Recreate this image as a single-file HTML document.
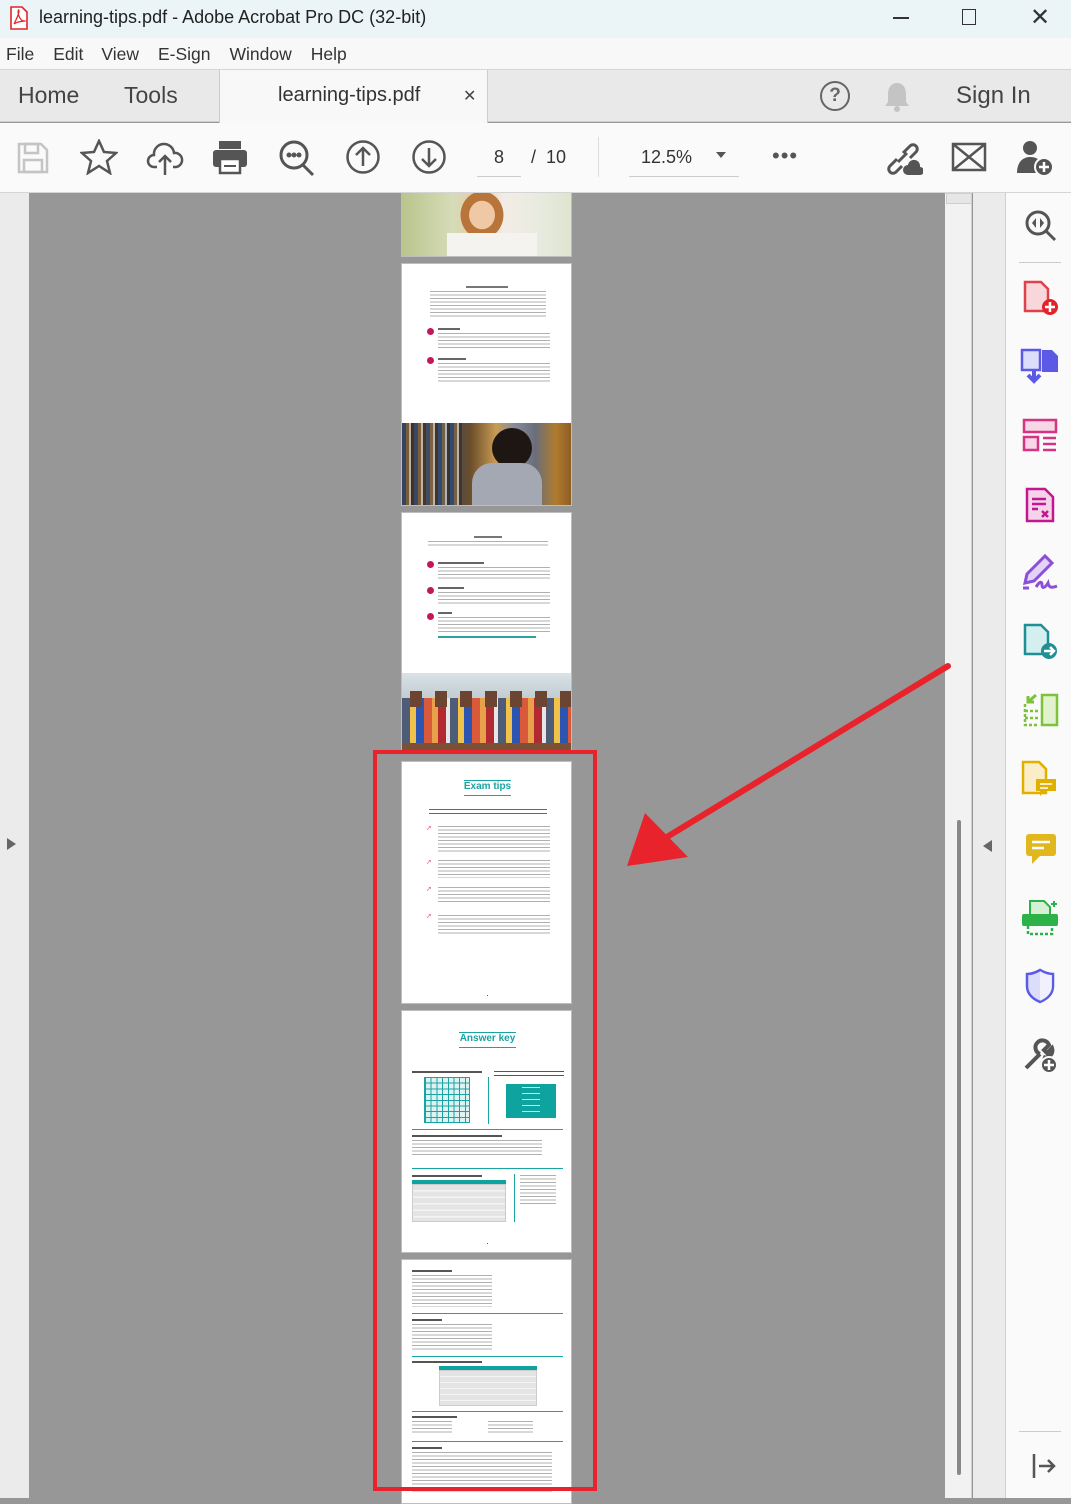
<!DOCTYPE html>
<html><head><meta charset="utf-8">
<style>
*{margin:0;padding:0;box-sizing:border-box}
body{width:1071px;height:1498px;position:relative;overflow:hidden;font-family:"Liberation Sans",sans-serif;background:#979797}
.a{position:absolute}
.t{position:absolute;background:repeating-linear-gradient(#b0b0b0 0 1px,transparent 1px 3.5px)}
.pg{position:absolute;left:401px;width:171px;background:#fff;border:1px solid #bdbdbd;overflow:hidden}
.dot{position:absolute;width:7px;height:7px;border-radius:50%;background:#c2185b}
.hr{position:absolute;height:1px;background:#1aa3a3}
.ic{position:absolute}
</style></head><body>
<div class="a" style="left:0;top:0;width:1071px;height:38px;background:#ebf5f8"></div>
<svg class="ic" style="left:9px;top:6px" width="20" height="24" viewBox="0 0 20 24"><path d="M2 1h11l5 5v17H2z" fill="#fff" stroke="#e0242a" stroke-width="1.6"/><path d="M5 18c3-6 5-10 5-13s-2 0 0 5 4 5 6 5-7 0-11 3" fill="none" stroke="#e0242a" stroke-width="1.2"/></svg>
<div class="a" style="left:39px;top:7px;font-size:18px;color:#222">learning-tips.pdf - Adobe Acrobat Pro DC (32-bit)</div>
<div class="a" style="left:893px;top:17px;width:16px;height:1.5px;background:#333"></div>
<div class="a" style="left:962px;top:9px;width:14px;height:16px;border:1.5px solid #333"></div>
<div class="a" style="left:1030px;top:3px;font-size:24px;color:#333">✕</div>
<div class="a" style="left:0;top:38px;width:1071px;height:32px;background:#f8f8f8;border-bottom:1px solid #d5d5d5"></div>
<div class="a" style="left:6px;top:44px;font-size:17.5px;color:#333"><span>File</span><span style="margin-left:19px">Edit</span><span style="margin-left:18px">View</span><span style="margin-left:19px">E-Sign</span><span style="margin-left:19px">Window</span><span style="margin-left:19px">Help</span></div>
<div class="a" style="left:0;top:70px;width:1071px;height:52px;background:#e9e9e9;border-bottom:1px solid #d0d0d0"></div>
<div class="a" style="left:219px;top:70px;width:269px;height:53px;background:#f8f8f8;border-left:1px solid #ccc;border-right:1px solid #ccc"></div>
<div class="a" style="left:18px;top:82px;font-size:23px;color:#444">Home</div>
<div class="a" style="left:124px;top:82px;font-size:23px;color:#444">Tools</div>
<div class="a" style="left:278px;top:84px;font-size:20px;color:#333">learning-tips.pdf</div>
<div class="a" style="left:463px;top:86px;font-size:16px;color:#444">✕</div>
<div class="a" style="left:820px;top:81px;width:30px;height:30px;border:2.5px solid #666;border-radius:50%;text-align:center;font-size:19px;line-height:25px;color:#666;font-weight:bold">?</div>
<svg class="ic" style="left:883px;top:81px" width="28" height="32" viewBox="0 0 28 32"><path d="M14 2c-6 0-9 5-9 11v8l-3 4h24l-3-4v-8c0-6-3-11-9-11z" fill="#c4c4c4"/><circle cx="14" cy="28" r="3" fill="#c4c4c4"/></svg>
<div class="a" style="left:956px;top:82px;font-size:24px;color:#444">Sign In</div>
<div class="a" style="left:0;top:123px;width:1071px;height:70px;background:#fafafa;border-bottom:1px solid #d5d5d5"></div>
<svg class="ic" style="left:16px;top:141px" width="34" height="34" viewBox="0 0 34 34" fill="none" stroke="#c4c4c4" stroke-width="2.5"><path d="M3 3h22l6 6v22H3z"/><rect x="9" y="3" width="13" height="9"/><rect x="8" y="19" width="18" height="12"/></svg>
<svg class="ic" style="left:80px;top:139px" width="38" height="36" viewBox="0 0 38 36" fill="none" stroke="#555" stroke-width="2.5"><path d="M19 2l5 11 12 1-9 8 3 12-11-7-11 7 3-12-9-8 12-1z"/></svg>
<svg class="ic" style="left:146px;top:140px" width="38" height="36" viewBox="0 0 38 36" fill="none" stroke="#555" stroke-width="2.5"><path d="M11 27H8a6 6 0 010-12 10 10 0 0120-2 7 7 0 012 14h-3"/><path d="M19 35V16M13 22l6-6 6 6"/></svg>
<svg class="ic" style="left:211px;top:139px" width="38" height="36" viewBox="0 0 38 36"><rect x="8" y="2" width="22" height="8" fill="#555"/><rect x="2" y="11" width="34" height="17" rx="3" fill="#555"/><rect x="9" y="20" width="20" height="14" fill="#fff" stroke="#555" stroke-width="2.5"/><rect x="13" y="26" width="12" height="2" fill="#555"/></svg>
<svg class="ic" style="left:278px;top:139px" width="38" height="38" viewBox="0 0 38 38" fill="none" stroke="#555" stroke-width="3"><circle cx="16" cy="16" r="13"/><path d="M25 26l10 10"/><circle cx="11" cy="16" r="1" fill="#555"/><circle cx="16" cy="16" r="1" fill="#555"/><circle cx="21" cy="16" r="1" fill="#555"/></svg>
<svg class="ic" style="left:345px;top:139px" width="36" height="36" viewBox="0 0 36 36" fill="none" stroke="#555" stroke-width="2.5"><circle cx="18" cy="18" r="15.5"/><path d="M18 27V10M11 16l7-7 7 7"/></svg>
<svg class="ic" style="left:411px;top:139px" width="36" height="36" viewBox="0 0 36 36" fill="none" stroke="#555" stroke-width="2.5"><circle cx="18" cy="18" r="15.5"/><path d="M18 9v17M11 20l7 7 7-7"/></svg>
<div class="a" style="left:477px;top:147px;width:44px;height:30px;border-bottom:1px solid #ccc;text-align:center;font-size:18px;color:#333">8</div>
<div class="a" style="left:531px;top:147px;font-size:18px;color:#333">/ &nbsp;10</div>
<div class="a" style="left:598px;top:137px;width:1px;height:40px;background:#ddd"></div>
<div class="a" style="left:629px;top:147px;width:110px;height:30px;border-bottom:1px solid #ccc;font-size:18px;color:#333;padding-left:12px">12.5%</div>
<div class="a" style="left:716px;top:152px;border:5px solid transparent;border-top:6px solid #555"></div>
<div class="a" style="left:772px;top:143px;font-size:22px;color:#555;letter-spacing:1px">•••</div>
<svg class="ic" style="left:883px;top:139px" width="40" height="38" viewBox="0 0 40 38" fill="none" stroke="#555" stroke-width="3"><path d="M14 20l-7 7a4 4 0 006 6l6-6M20 14l7-7a4 4 0 016 6l-6 6M15 23l9-9"/><path d="M25 36a5 5 0 010-10 6 6 0 0112 2 4 4 0 010 8z" fill="#555" stroke="none"/></svg>
<svg class="ic" style="left:951px;top:142px" width="36" height="30" viewBox="0 0 36 30" fill="none" stroke="#555" stroke-width="2.5"><rect x="2" y="2" width="32" height="26"/><path d="M2 2l32 26M34 2L2 28"/></svg>
<svg class="ic" style="left:1015px;top:139px" width="40" height="38" viewBox="0 0 40 38"><circle cx="15" cy="9" r="7" fill="#555"/><path d="M2 34c0-11 6-16 13-16s9 3 10 5v11z" fill="#555"/><circle cx="29" cy="28" r="9" fill="#555" stroke="#fafafa" stroke-width="2"/><path d="M29 23v10M24 28h10" stroke="#fff" stroke-width="2.5"/></svg>
<div class="a" style="left:0;top:193px;width:29px;height:1305px;background:#ebebeb"></div>
<div class="a" style="left:7px;top:838px;border:6px solid transparent;border-left:9px solid #666;border-right:0"></div>
<div class="a" style="left:945px;top:193px;width:27px;height:1305px;background:#f2f2f2;border-right:1px solid #cfcfcf"></div>
<div class="a" style="left:946px;top:193px;width:26px;height:11px;background:#e6e6e6;border:1px solid #cfcfcf"></div>
<div class="a" style="left:957px;top:820px;width:4px;height:655px;background:#888;border-radius:2px"></div>
<div class="a" style="left:973px;top:193px;width:33px;height:1305px;background:#ebebeb;border-right:1px solid #cfcfcf"></div>
<div class="a" style="left:983px;top:840px;border:6px solid transparent;border-right:9px solid #666;border-left:0"></div>
<div class="a" style="left:1006px;top:193px;width:65px;height:1305px;background:#fafafa"></div>
<div class="a" style="left:1019px;top:262px;width:42px;height:1px;background:#ccc"></div>
<div class="a" style="left:1019px;top:1431px;width:42px;height:1px;background:#ccc"></div>
<svg class="ic" style="left:1024px;top:209px" width="34" height="34" viewBox="0 0 34 34" fill="none" stroke="#555" stroke-width="3"><circle cx="14" cy="14" r="11"/><path d="M22 22l9 9"/><path d="M12 9l-4 5 4 5zM16 9l4 5-4 5z" fill="#555" stroke="none"/></svg>
<svg class="ic" style="left:1022px;top:280px" width="38" height="36" viewBox="0 0 38 36"><path d="M3 2h16l7 7v22H3z" fill="#f8d7da" stroke="#e0404a" stroke-width="2.5"/><circle cx="28" cy="27" r="8" fill="#e0242a"/><path d="M28 22v10M23 27h10" stroke="#fff" stroke-width="2.5"/></svg>
<svg class="ic" style="left:1020px;top:347px" width="40" height="38" viewBox="0 0 40 38"><rect x="2" y="3" width="18" height="20" fill="#dcdcfb" stroke="#5a5ae6" stroke-width="2.5"/><path d="M22 3h10l6 6v16H22z" fill="#5a5ae6"/><path d="M14 22v12M8 28l6 6 6-6" stroke="#5a5ae6" stroke-width="4" fill="none"/></svg>
<svg class="ic" style="left:1022px;top:418px" width="36" height="34" viewBox="0 0 36 34" fill="none" stroke="#d63384" stroke-width="2.5"><rect x="2" y="2" width="32" height="12" fill="#f7d6e6"/><rect x="2" y="19" width="14" height="13" fill="#f7d6e6"/><path d="M21 20h13M21 26h13M21 32h13"/></svg>
<svg class="ic" style="left:1024px;top:487px" width="32" height="36" viewBox="0 0 32 36" fill="none" stroke="#c2188f" stroke-width="2.5"><path d="M3 2h18l8 8v24H3z" fill="#f5d3ea"/><path d="M8 12h14M8 17h14M8 22h6M18 24l6 6M24 24l-6 6"/></svg>
<svg class="ic" style="left:1020px;top:553px" width="40" height="38" viewBox="0 0 40 38" fill="none" stroke="#8c4fd8" stroke-width="3"><path d="M5 30l2-9L25 3l7 7-18 18z" fill="#e3d4f7"/><path d="M3 35h6M16 34c4-6 6-6 6-2s3 3 6-2c1 5 4 5 9 3"/></svg>
<svg class="ic" style="left:1022px;top:623px" width="38" height="38" viewBox="0 0 38 38"><path d="M3 2h16l7 7v22H3z" fill="#d4efef" stroke="#1f8f95" stroke-width="2.5"/><circle cx="27" cy="28" r="8" fill="#1f8f95"/><path d="M22 28h9M28 24l4 4-4 4" stroke="#fff" stroke-width="2.5" fill="none"/></svg>
<svg class="ic" style="left:1022px;top:692px" width="38" height="36" viewBox="0 0 38 36" fill="none" stroke="#7cc23a" stroke-width="2.5"><rect x="20" y="3" width="15" height="30" fill="#e1f2cf"/><path d="M3 12v21h14M3 19h14M3 26h14" stroke-dasharray="3 2"/><path d="M14 3L6 10M6 4v6h6" stroke-width="3"/></svg>
<svg class="ic" style="left:1020px;top:760px" width="40" height="38" viewBox="0 0 40 38"><path d="M3 2h16l7 7v24H3z" fill="#faeec8" stroke="#e0b000" stroke-width="2.5"/><rect x="16" y="19" width="20" height="12" fill="#e0b000"/><path d="M20 31v5l5-5" fill="#e0b000"/><path d="M20 24h12M20 28h8" stroke="#fff" stroke-width="1.5"/></svg>
<svg class="ic" style="left:1024px;top:832px" width="34" height="34" viewBox="0 0 34 34"><rect x="2" y="2" width="30" height="22" rx="3" fill="#e0b71c"/><path d="M8 24v8l8-8z" fill="#e0b71c"/><path d="M8 10h18M8 16h12" stroke="#fff" stroke-width="2.5"/></svg>
<svg class="ic" style="left:1020px;top:899px" width="40" height="38" viewBox="0 0 40 38"><path d="M10 2h14l6 6v8H10z" fill="#d6f0d6" stroke="#2db24a" stroke-width="2"/><rect x="2" y="15" width="36" height="12" rx="2" fill="#2db24a"/><path d="M8 27v8h24v-8" fill="none" stroke="#2db24a" stroke-width="2.5" stroke-dasharray="3 2"/><path d="M34 2v6M31 5h6" stroke="#2db24a" stroke-width="2"/></svg>
<svg class="ic" style="left:1024px;top:968px" width="32" height="36" viewBox="0 0 32 36"><path d="M16 2C11 5 6 6 3 6v12c0 8 6 13 13 16 7-3 13-8 13-16V6c-3 0-8-1-13-4z" fill="#dcdcfb" stroke="#5a5ae6" stroke-width="2.5"/><path d="M16 3v30c7-3 12-8 12-15V7c-3 0-7-1-12-4z" fill="#fff" opacity=".6"/></svg>
<svg class="ic" style="left:1020px;top:1036px" width="40" height="40" viewBox="0 0 40 40" fill="none" stroke="#555" stroke-width="4"><path d="M6 32l14-14M20 18a7 7 0 119-9l-5 5 3 3 5-5a7 7 0 01-9 9"/><circle cx="29" cy="29" r="8" fill="#555" stroke="#fafafa" stroke-width="2"/><path d="M29 24v10M24 29h10" stroke="#fff" stroke-width="2.5"/></svg>
<svg class="ic" style="left:1030px;top:1452px" width="28" height="28" viewBox="0 0 28 28" fill="none" stroke="#555" stroke-width="2.5"><path d="M4 2v24M9 14h15M18 8l6 6-6 6"/></svg>

<div class="pg" style="top:193px;height:64px;border-top:0;background:linear-gradient(90deg,#b9c48d 0%,#d6dcb7 30%,#e5c9a8 45%,#f3ece6 60%,#e8ebe0 80%,#dfe4d0 100%)">
<div class="a" style="left:50px;top:0;width:60px;height:55px;background:radial-gradient(ellipse at 50% 40%,#efc8a5 0 30%,#b9743a 31% 50%,transparent 51%)"></div>
<div class="a" style="left:45px;top:40px;width:90px;height:24px;background:#f5f3ef"></div>
</div>
<div class="pg" style="top:263px;height:243px">
<div class="t" style="left:64px;top:22px;width:42px;height:2px;background:#777"></div>
<div class="t" style="left:28px;top:27px;width:116px;height:28px"></div>
<div class="dot" style="left:25px;top:64px"></div>
<div class="t" style="left:36px;top:64px;width:22px;height:2px;background:#666"></div>
<div class="t" style="left:36px;top:69px;width:112px;height:16px"></div>
<div class="dot" style="left:25px;top:93px"></div>
<div class="t" style="left:36px;top:94px;width:28px;height:2px;background:#666"></div>
<div class="t" style="left:36px;top:99px;width:112px;height:20px"></div>
<div class="a" style="left:0;top:159px;width:171px;height:84px;background:linear-gradient(90deg,#4a3324,#6a5138 15%,#2f4a6a 25%,#6b4e2a 40%,#c99a54 55%,#8a8e9a 65%,#6a6e7a 78%,#b07b2d 90%,#8a5a25)">
<div class="a" style="left:0;top:0;width:60px;height:84px;background:repeating-linear-gradient(90deg,#2b4a78 0 4px,#8a6a40 4px 7px,#e6e1d6 7px 9px,#3a2a1f 9px 12px);opacity:.7"></div>
<div class="a" style="left:90px;top:5px;width:40px;height:40px;border-radius:50%;background:#1e1612"></div>
<div class="a" style="left:70px;top:40px;width:70px;height:44px;border-radius:20px 20px 0 0;background:#a4a8b2"></div>
</div>
</div>
<div class="pg" style="top:512px;height:239px">
<div class="t" style="left:72px;top:23px;width:28px;height:2px;background:#777"></div>
<div class="t" style="left:26px;top:28px;width:120px;height:7px"></div>
<div class="dot" style="left:25px;top:48px"></div>
<div class="t" style="left:36px;top:49px;width:46px;height:2px;background:#666"></div>
<div class="t" style="left:36px;top:54px;width:112px;height:12px"></div>
<div class="dot" style="left:25px;top:74px"></div>
<div class="t" style="left:36px;top:74px;width:26px;height:2px;background:#666"></div>
<div class="t" style="left:36px;top:79px;width:112px;height:12px"></div>
<div class="dot" style="left:25px;top:100px"></div>
<div class="t" style="left:36px;top:99px;width:14px;height:2px;background:#666"></div>
<div class="t" style="left:36px;top:104px;width:112px;height:16px"></div>
<div class="t" style="left:36px;top:123px;width:98px;height:2px;background:#2aa3a3"></div>
<div class="a" style="left:0;top:160px;width:171px;height:79px;background:linear-gradient(#d9e2e6 0,#bdc8cc 40%,#7b6a5c 75%,#5a4434 100%)">
<div class="a" style="left:0;top:25px;width:171px;height:45px;background:repeating-linear-gradient(90deg,#4e5c78 0 8px,#f0c24b 8px 14px,#2b55b0 14px 22px,#d95a3a 22px 30px,#e8a04a 30px 36px,#b22a30 36px 44px,#e6e6e6 44px 48px)"></div>
<div class="a" style="left:0;top:18px;width:171px;height:16px;background:repeating-linear-gradient(90deg,transparent 0 8px,#6b4532 8px 20px,transparent 20px 25px)"></div>
<div class="a" style="left:0;top:70px;width:171px;height:9px;background:#7a5136"></div>
</div>
</div>
<div class="pg" style="top:761px;height:243px">
<div class="a" style="left:0;top:19px;width:171px;text-align:center;font-size:10px;color:#1aa3a3;font-weight:bold">Exam tips</div>
<div class="hr" style="left:62px;top:18px;width:47px"></div>
<div class="hr" style="left:62px;top:33px;width:47px"></div>
<div class="t" style="left:27px;top:47px;width:118px;height:6px;background:repeating-linear-gradient(#666 0 1px,transparent 1px 4px)"></div>
<div class="a" style="left:24px;top:62px;font-size:7px;color:#e05a70">➚</div><div class="t" style="left:36px;top:64px;width:112px;height:26px"></div>
<div class="a" style="left:24px;top:96px;font-size:7px;color:#e05a70">➚</div><div class="t" style="left:36px;top:98px;width:112px;height:18px"></div>
<div class="a" style="left:24px;top:123px;font-size:7px;color:#e05a70">➚</div><div class="t" style="left:36px;top:125px;width:112px;height:17px"></div>
<div class="a" style="left:24px;top:150px;font-size:7px;color:#e05a70">➚</div><div class="t" style="left:36px;top:153px;width:112px;height:20px"></div>
<div class="a" style="left:85px;top:233px;width:1px;height:1px;background:#555"></div>
</div>
<div class="pg" style="top:1010px;height:243px">
<div class="a" style="left:0;top:22px;width:171px;text-align:center;font-size:10px;color:#1aa3a3;font-weight:bold">Answer key</div>
<div class="hr" style="left:57px;top:21px;width:57px"></div>
<div class="hr" style="left:57px;top:36px;width:57px"></div>
<div class="t" style="left:10px;top:60px;width:70px;height:2px;background:#555"></div>
<div class="a" style="left:22px;top:66px;width:46px;height:46px;border:1px solid #1aa3a3;background:repeating-linear-gradient(90deg,#1aa3a3 0 1px,#dff2f2 1px 5.7px),#fff"></div>
<div class="a" style="left:22px;top:66px;width:46px;height:46px;background:repeating-linear-gradient(#1aa3a3 0 1px,transparent 1px 5.7px)"></div>
<div class="a" style="left:86px;top:66px;width:1px;height:47px;background:#1aa3a3"></div>
<div class="t" style="left:92px;top:60px;width:70px;height:6px;background:repeating-linear-gradient(#555 0 1px,transparent 1px 4px)"></div>
<div class="a" style="left:104px;top:73px;width:50px;height:34px;background:#0fa3a0"></div>
<div class="t" style="left:120px;top:76px;width:18px;height:26px;background:repeating-linear-gradient(#bfeeee 0 1px,transparent 1px 6px)"></div>
<div class="hr" style="left:10px;top:118px;width:151px"></div>
<div class="t" style="left:10px;top:124px;width:90px;height:2px;background:#555"></div>
<div class="t" style="left:10px;top:129px;width:130px;height:16px"></div>
<div class="hr" style="left:10px;top:157px;width:151px"></div>
<div class="t" style="left:10px;top:164px;width:70px;height:2px;background:#555"></div>
<div class="a" style="left:10px;top:169px;width:94px;height:4px;background:#0fa3a0"></div>
<div class="a" style="left:10px;top:173px;width:94px;height:38px;background:repeating-linear-gradient(#e4e4e4 0 5px,#f4f4f4 5px 6.5px);border:1px solid #ccc"></div>
<div class="a" style="left:112px;top:163px;width:1px;height:48px;background:#1aa3a3"></div>
<div class="t" style="left:118px;top:164px;width:36px;height:30px"></div>
<div class="a" style="left:85px;top:232px;width:1px;height:1px;background:#555"></div>
</div>
<div class="pg" style="top:1259px;height:245px">
<div class="t" style="left:10px;top:10px;width:40px;height:2px;background:#555"></div>
<div class="t" style="left:10px;top:15px;width:80px;height:32px"></div>
<div class="hr" style="left:10px;top:53px;width:151px"></div>
<div class="t" style="left:10px;top:59px;width:30px;height:2px;background:#555"></div>
<div class="t" style="left:10px;top:64px;width:80px;height:27px"></div>
<div class="hr" style="left:10px;top:96px;width:151px"></div>
<div class="t" style="left:10px;top:101px;width:70px;height:2px;background:#555"></div>
<div class="a" style="left:37px;top:106px;width:98px;height:4px;background:#0fa3a0"></div>
<div class="a" style="left:37px;top:110px;width:98px;height:36px;background:repeating-linear-gradient(#e4e4e4 0 5px,#f4f4f4 5px 6px);border:1px solid #ccc"></div>
<div class="hr" style="left:10px;top:151px;width:151px"></div>
<div class="t" style="left:10px;top:156px;width:45px;height:2px;background:#555"></div>
<div class="t" style="left:10px;top:161px;width:40px;height:14px"></div>
<div class="t" style="left:86px;top:161px;width:45px;height:14px"></div>
<div class="hr" style="left:10px;top:181px;width:151px"></div>
<div class="t" style="left:10px;top:187px;width:30px;height:2px;background:#555"></div>
<div class="t" style="left:10px;top:192px;width:140px;height:40px"></div>
</div>
<div class="a" style="left:373px;top:750px;width:224px;height:741px;border:4px solid #e8232b"></div>
<svg class="a" style="left:600px;top:650px" width="360" height="230" viewBox="0 0 360 230"><path d="M348 16L62 190" stroke="#e8232b" stroke-width="6" stroke-linecap="round"/><path d="M27 216L45 163 88 207z" fill="#e8232b"/></svg>
</body></html>
